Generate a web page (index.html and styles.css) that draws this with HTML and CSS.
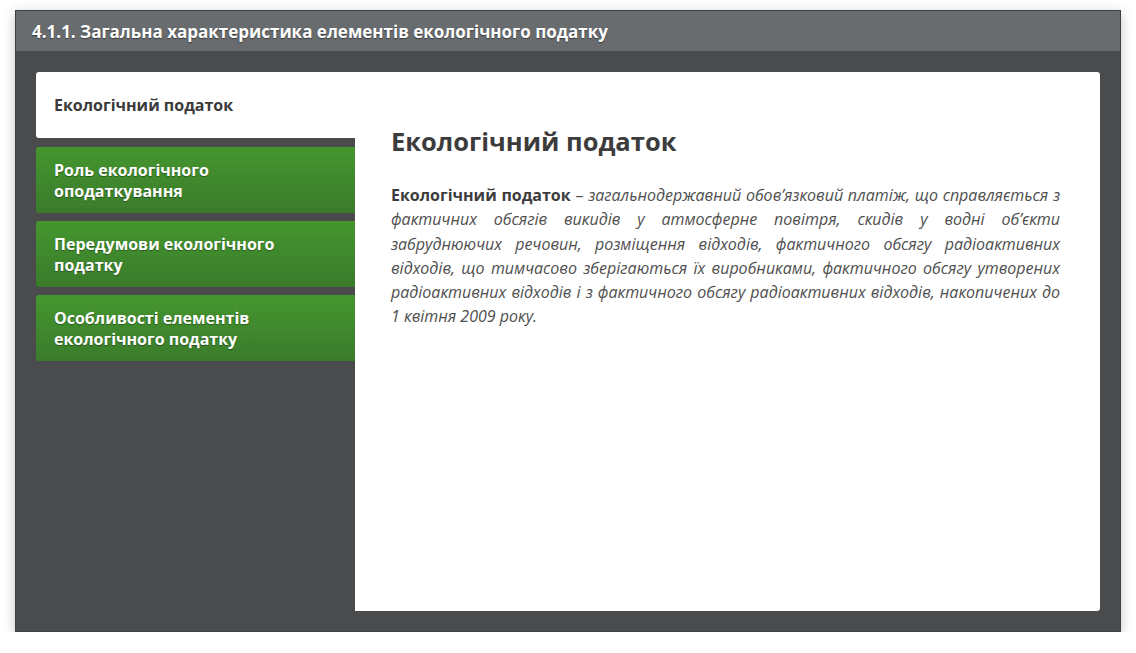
FILE: index.html
```html
<!DOCTYPE html>
<html lang="uk">
<head>
<meta charset="utf-8">
<link rel="stylesheet" href="styles.css">
</head>
<body>
<div class="frame">
  <div class="header">4.1.1. Загальна характеристика елементів екологічного податку</div>
  <div class="body">
    <div class="layout">
      <div class="tabs">
        <div class="tab active">Екологічний податок</div>
        <div class="tab">Роль екологічного оподаткування</div>
        <div class="tab">Передумови екологічного податку</div>
        <div class="tab">Особливості елементів екологічного податку</div>
      </div>
      <div class="panel">
        <h1 class="title">Екологічний податок</h1>
        <p class="text"><b>Екологічний податок</b> – <i>загальнодержавний обов’язковий платіж, що справляється з фактичних обсягів викидів у атмосферне повітря, скидів у водні об’єкти забруднюючих речовин, розміщення відходів, фактичного обсягу радіоактивних відходів, що тимчасово зберігаються їх виробниками, фактичного обсягу утворених радіоактивних відходів і з фактичного обсягу радіоактивних відходів, накопичених до 1 квітня 2009 року.</i></p>
      </div>
    </div>
  </div>
</div>
</body>
</html>
```

FILE: styles.css
```css
html, body {
  margin: 0;
  padding: 0;
  background: #ffffff;
  font-family: "Open Sans", "Noto Sans", sans-serif;
}

.frame {
  margin: 10px 0 0 15px;
  width: 1106px;
  height: 622px;
  box-sizing: border-box;
  border: 1px solid #3f4042;
  box-shadow: 0 3px 12px rgba(0, 0, 0, 0.22);
  display: flex;
  flex-direction: column;
}

.header {
  height: 40px;
  flex: none;
  background: #696c6f;
  color: #ffffff;
  font-weight: 700;
  font-size: 17px;
  line-height: 41px;
  padding-left: 16px;
  text-shadow: 0 1px 1px rgba(0, 0, 0, 0.45);
}

.body {
  flex: 1;
  background: #4a4b4d;
  padding: 21px 20px 20px 20px;
  display: flex;
}

.layout {
  flex: 1;
  display: flex;
}

.tabs {
  width: 319px;
  flex: none;
  display: flex;
  flex-direction: column;
  gap: 8px;
}

.tab {
  height: 66px;
  box-sizing: border-box;
  padding: 1px 18px 0 18px;
  display: flex;
  align-items: center;
  border-radius: 3px 0 0 3px;
  background: linear-gradient(#45962f, #3a7b2b);
  color: #ffffff;
  font-weight: 700;
  font-size: 16px;
  line-height: 21px;
  text-shadow: 0 1px 1px rgba(0, 0, 0, 0.35);
}

.tab.active {
  background: #ffffff;
  color: #3a3a3a;
  font-weight: 700;
  font-size: 16px;
  text-shadow: none;
  margin-bottom: 1px;
}

.panel {
  flex: 1;
  background: #ffffff;
  border-radius: 0 3px 3px 0;
  padding: 50px 40px 0 36px;
}

.title {
  margin: 0;
  font-size: 25.5px;
  font-weight: 700;
  color: #3c3c3c;
  line-height: 38px;
}

.text {
  margin: 23px 0 0 0;
  font-size: 16px;
  line-height: 24.3px;
  color: #4f4f4f;
  text-align: justify;
}

.text b {
  font-weight: 700;
  color: #3c3c3c;
}
```
